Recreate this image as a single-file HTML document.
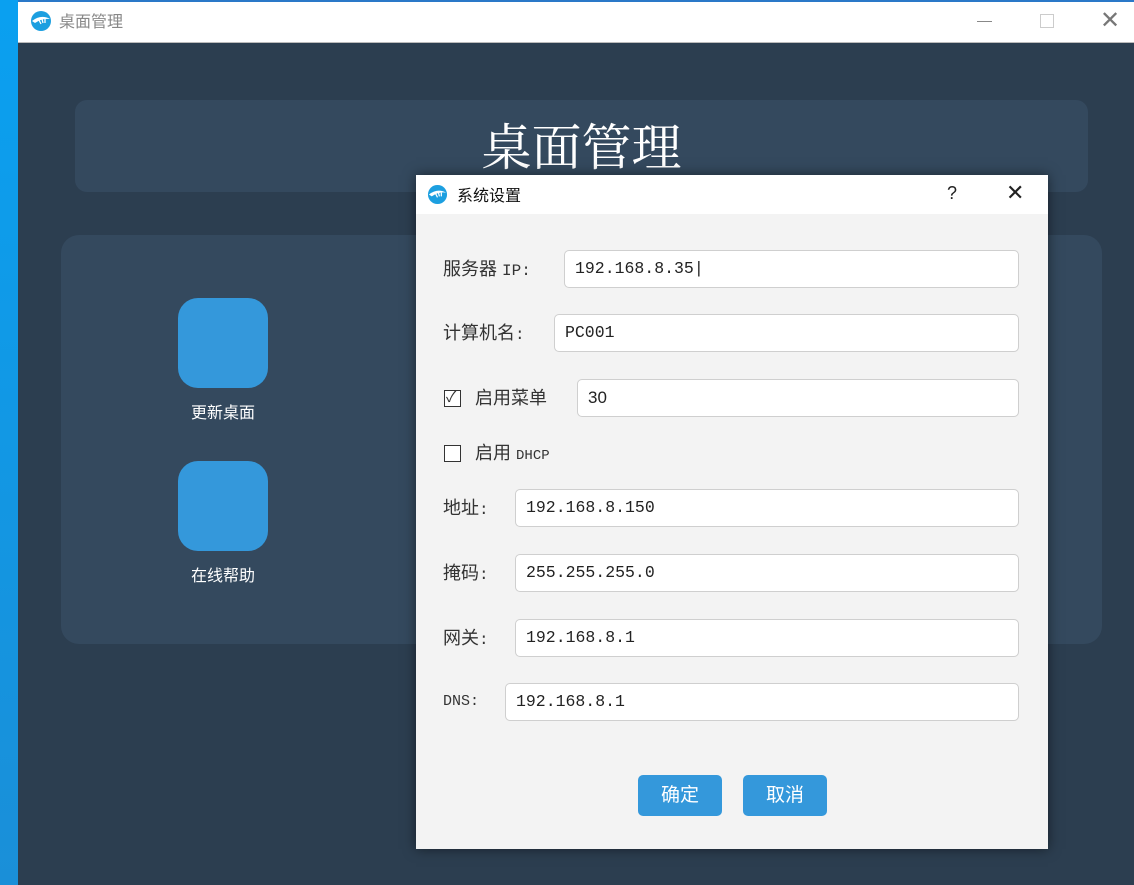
<!DOCTYPE html>
<html><head><meta charset="utf-8"><style>
*{margin:0;padding:0;box-sizing:border-box}
body{width:1134px;height:885px;overflow:hidden;position:relative;background:#2c3e50;font-family:"Liberation Sans","Noto Sans CJK SC",sans-serif}
.abs{position:absolute}
.lbl{position:absolute;font-size:18px;color:#333;height:38px;line-height:38px;white-space:nowrap}
.m{font-family:"Liberation Mono",monospace;font-size:16px}
.inp{position:absolute;height:38px;right:115px;background:#fff;border:1px solid #cfcfcf;border-radius:5px;font-family:"Liberation Mono",monospace;font-size:16.5px;color:#222;padding-left:10px;line-height:36px}
.btn{position:absolute;top:775px;width:84px;height:41px;background:#3498db;border-radius:5px;color:#fff;font-size:19px;text-align:center;line-height:41px}
.cb{position:absolute;left:444px;width:17px;height:17px;border:1.5px solid #333;background:#fff}
</style></head><body>
<div class="abs" style="left:0;top:0;width:18px;height:885px;background:linear-gradient(#0aa0f0,#1a8fd8)"></div>
<div class="abs" style="left:18px;top:0;width:1116px;height:43px;background:#fff;border-top:2px solid #2a78c8;border-bottom:1px solid #bbb"></div>
<svg class="abs" style="left:30px;top:10px" width="22" height="22" viewBox="0 0 22 22"><circle cx="11" cy="11" r="10" fill="#1c9fe0"/><path d="M2 11 Q11 4 20 9 Q12 8 5 13Z" fill="#fff"/><path d="M9 10l2 4M12 9l1 4M15 9l0 4" stroke="#fff" stroke-width="1.3"/></svg>
<div class="abs" style="left:59px;top:8px;font-size:16px;color:#888">桌面管理</div>
<div class="abs" style="left:977px;top:21px;width:15px;height:1px;background:#888"></div>
<div class="abs" style="left:1040px;top:14px;width:14px;height:14px;border:1px solid #ccc"></div>
<div class="abs" style="left:1100px;top:6px;font-size:24px;color:#777;font-weight:300">✕</div>

<div class="abs" style="left:75px;top:100px;width:1013px;height:92px;background:#34495e;border-radius:12px"></div>
<div class="abs" style="left:75px;top:108px;width:1013px;text-align:center;font-size:50px;color:#fff;font-family:'Noto Serif CJK SC',serif">桌面管理</div>
<div class="abs" style="left:61px;top:235px;width:1041px;height:409px;background:#34495e;border-radius:18px"></div>
<div class="abs" style="left:178px;top:298px;width:90px;height:90px;background:#3498db;border-radius:20px"></div>
<div class="abs" style="left:178px;top:399px;width:90px;text-align:center;color:#fff;font-size:16px">更新桌面</div>
<div class="abs" style="left:178px;top:461px;width:90px;height:90px;background:#3498db;border-radius:20px"></div>
<div class="abs" style="left:178px;top:562px;width:90px;text-align:center;color:#fff;font-size:16px">在线帮助</div>

<div class="abs" style="left:416px;top:175px;width:632px;height:674px;background:#f3f3f3;box-shadow:0 0 12px rgba(0,0,0,.5)">
<div style="height:39px;background:#fff"></div></div>
<svg class="abs" style="left:427px;top:184px" width="21" height="21" viewBox="0 0 22 22"><circle cx="11" cy="11" r="10" fill="#1c9fe0"/><path d="M2 11 Q11 4 20 9 Q12 8 5 13Z" fill="#fff"/><path d="M9 10l2 4M12 9l1 4M15 9l0 4" stroke="#fff" stroke-width="1.3"/></svg>
<div class="abs" style="left:457px;top:182px;font-size:16px;color:#111">系统设置</div>
<div class="abs" style="left:947px;top:183px;font-size:18px;color:#222">?</div>
<div class="abs" style="left:1006px;top:180px;font-size:22px;color:#222">✕</div>

<div class="lbl" style="left:443px;top:250px">服务器 <span class="m">IP:</span></div>
<div class="inp" style="left:564px;top:250px">192.168.8.35|</div>
<div class="lbl" style="left:443px;top:314px">计算机名<span class="m">:</span></div>
<div class="inp" style="left:554px;top:314px">PC001</div>
<div class="cb" style="top:390px"><span style="position:absolute;left:1px;top:-5px;font-size:15px;color:#333">✓</span></div>
<div class="lbl" style="left:475px;top:379px">启用菜单</div>
<div class="inp" style="left:577px;top:379px;font-family:'Liberation Sans',sans-serif;font-size:17px">30</div>
<div class="cb" style="top:445px"></div>
<div class="lbl" style="left:475px;top:434px">启用 <span class="m" style="font-size:14px">DHCP</span></div>
<div class="lbl" style="left:443px;top:489px">地址<span class="m">:</span></div>
<div class="inp" style="left:515px;top:489px">192.168.8.150</div>
<div class="lbl" style="left:443px;top:554px">掩码<span class="m">:</span></div>
<div class="inp" style="left:515px;top:554px">255.255.255.0</div>
<div class="lbl" style="left:443px;top:619px">网关<span class="m">:</span></div>
<div class="inp" style="left:515px;top:619px">192.168.8.1</div>
<div class="lbl m" style="left:443px;top:683px;font-size:15px">DNS:</div>
<div class="inp" style="left:505px;top:683px">192.168.8.1</div>
<div class="btn" style="left:638px">确定</div>
<div class="btn" style="left:743px">取消</div>
</body></html>
